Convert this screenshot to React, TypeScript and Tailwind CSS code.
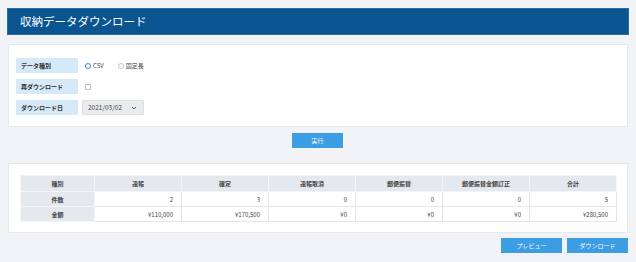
import React from 'react';

const font = { fontFamily: '"Noto Sans CJK JP", "Noto Sans", sans-serif' };

const columns = ['種別', '速報', '確定', '速報取消', '郵便振替', '郵便振替金額訂正', '合計'];
const rows = [
  ['件数', '2', '3', '0', '0', '0', '5'],
  ['金額', '¥110,000', '¥170,500', '¥0', '¥0', '¥0', '¥280,500'],
];

function Label({ children }: { children: React.ReactNode }) {
  return (
    <div className="w-[62px] h-[15px] bg-[#d6e9f9] flex items-center pl-[5px] text-[6px] font-bold text-[#333]">
      {children}
    </div>
  );
}

export default function App() {
  return (
    <div className="w-[636px] h-[262px] bg-[#f2f3f7] pt-[8px] px-[7px] text-[#333]" style={font}>
      {/* Title bar */}
      <div className="h-[27px] bg-[#0a558f] flex items-center pl-[12px] text-white text-[11.5px] border border-[#2a6ea3]">
        収納データダウンロード
      </div>

      {/* Form panel */}
      <div className="mt-[9px] mx-[1px] h-[83px] bg-white border border-[#e6e8ec] pt-[13px] pl-[7px] flex flex-col gap-[6px]">
        <div className="flex items-center gap-[6px]">
          <Label>データ種別</Label>
          <div className="flex items-center text-[6px] text-[#444]">
            <span className="w-[6px] h-[6px] rounded-full border-[1.5px] border-[#2a8ad8] bg-white ml-[1px]" />
            <span className="ml-[2px]">CSV</span>
            <span className="ml-[14px] w-[6px] h-[6px] rounded-full border border-[#c4c4c4]" />
            <span className="ml-[2px]">固定長</span>
          </div>
        </div>
        <div className="flex items-center gap-[6px]">
          <Label>再ダウンロード</Label>
          <span className="ml-[1px] w-[6px] h-[6px] rounded-[1px] border border-[#bbb] bg-white" />
        </div>
        <div className="flex items-center gap-[4px]">
          <Label>ダウンロード日</Label>
          <div className="w-[62px] h-[15px] bg-[#e9ebef] border border-[#dcdfe4] rounded-[1px] flex items-center justify-between pl-[5px] pr-[6px] text-[6.5px] text-[#444]">
            <span>2021/03/02</span>
            <svg width="6" height="4" viewBox="0 0 6 4" fill="none">
              <path d="M1 1l2 2 2-2" stroke="#444" strokeWidth="0.9" />
            </svg>
          </div>
        </div>
      </div>

      <div className="flex justify-center mt-[6px]">
        <button className="w-[51px] h-[15px] bg-[#3d9de2] text-white text-[6px] ml-[-1px]">実行</button>
      </div>

      {/* Result table panel */}
      <div className="mt-[15px] mx-[1px] h-[70px] bg-white border border-[#e6e8ec] pt-[11px] pl-[11px] pr-[11px]">
        <table className="w-[597px] border-collapse text-[6px] text-[#444] table-fixed">
          <colgroup>
            <col className="w-[74px]" />
            {columns.slice(1).map((c) => (
              <col key={c} className="w-[87px]" />
            ))}
          </colgroup>
          <thead>
            <tr className="h-[16px] bg-[#e5e8ec]">
              {columns.map((c) => (
                <th key={c} className="font-bold border border-[#f4f5f7] text-center text-[#444]">
                  {c}
                </th>
              ))}
            </tr>
          </thead>
          <tbody>
            {rows.map((r) => (
              <tr key={r[0]} className="h-[15px]">
                {r.map((v, i) =>
                  i === 0 ? (
                    <td key={i} className="bg-[#e5e8ec] border border-[#f4f5f7] text-center font-bold">
                      {v}
                    </td>
                  ) : (
                    <td key={i} className="border border-[#e2e5ea] text-right pr-[8px]">
                      {v}
                    </td>
                  )
                )}
              </tr>
            ))}
          </tbody>
        </table>
      </div>

      <div className="flex justify-end gap-[5px] mt-[5px] pr-[1px]">
        <button className="w-[61px] h-[15px] bg-[#3d9de2] text-white text-[6px]">プレビュー</button>
        <button className="w-[61px] h-[15px] bg-[#3d9de2] text-white text-[6px]">ダウンロード</button>
      </div>
    </div>
  );
}
